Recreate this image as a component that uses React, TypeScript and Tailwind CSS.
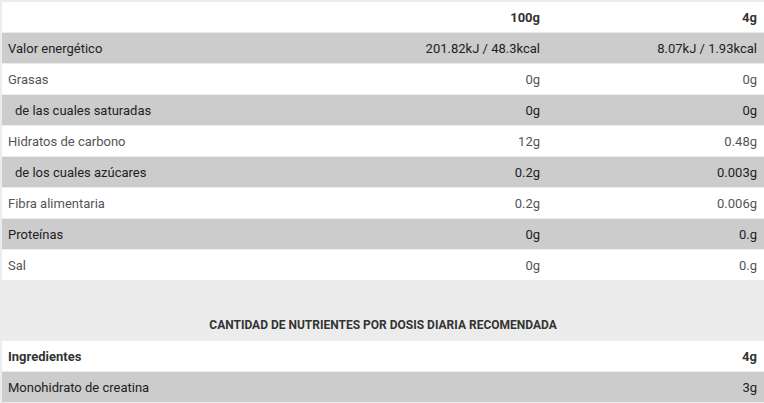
import React from "react";

interface NutrientRow {
  label: string;
  per100: string;
  perDose: string;
  sub?: boolean;
}

const nutrients: NutrientRow[] = [
  { label: "Valor energético", per100: "201.82kJ / 48.3kcal", perDose: "8.07kJ / 1.93kcal" },
  { label: "Grasas", per100: "0g", perDose: "0g" },
  { label: "de las cuales saturadas", per100: "0g", perDose: "0g", sub: true },
  { label: "Hidratos de carbono", per100: "12g", perDose: "0.48g" },
  { label: "de los cuales azúcares", per100: "0.2g", perDose: "0.003g", sub: true },
  { label: "Fibra alimentaria", per100: "0.2g", perDose: "0.006g" },
  { label: "Proteínas", per100: "0g", perDose: "0.g" },
  { label: "Sal", per100: "0g", perDose: "0.g" },
];

const ingredients = [{ name: "Monohidrato de creatina", amount: "3g" }];

export default function App() {
  return (
    <div
      className="w-[764px] h-[403px] overflow-hidden bg-[#ececec] pl-[2px] pt-[2px] text-[13px]"
      style={{ fontFamily: "Roboto, 'Liberation Sans', sans-serif" }}
    >
      <div className="flex flex-col gap-px">
        <div className="flex h-[30px] items-center bg-white pt-px font-bold text-[#333]">
          <div className="flex-1 px-[6px]"></div>
          <div className="w-[217px] px-[7px] text-right">100g</div>
          <div className="w-[217px] px-[7px] text-right">4g</div>
        </div>
        {nutrients.map((row, i) => {
          const gray = i % 2 === 0;
          return (
            <div
              key={row.label}
              className={
                gray
                  ? "flex h-[30px] items-center bg-[#cccccc] pt-px text-[#222]"
                  : "flex h-[30px] items-center bg-white pt-px text-[#555]"
              }
            >
              <div className={row.sub ? "flex-1 pl-[13px]" : "flex-1 pl-[6px]"}>{row.label}</div>
              <div className="w-[217px] px-[7px] text-right">{row.per100}</div>
              <div className="w-[217px] px-[7px] text-right">{row.perDose}</div>
            </div>
          );
        })}
      </div>

      <div className="flex h-[61px] items-end justify-center pb-[7px] text-[12px] font-bold uppercase text-[#333]">
        Cantidad de nutrientes por dosis diaria recomendada
      </div>

      <div className="flex flex-col gap-px">
        <div className="flex h-[30px] items-center bg-white pt-px font-bold text-[#333]">
          <div className="flex-1 px-[6px]">Ingredientes</div>
          <div className="w-[217px] px-[7px] text-right">4g</div>
        </div>
        {ingredients.map((ing) => (
          <div key={ing.name} className="flex h-[30px] items-center bg-[#cccccc] pt-px text-[#222]">
            <div className="flex-1 px-[6px]">{ing.name}</div>
            <div className="w-[217px] px-[7px] text-right">{ing.amount}</div>
          </div>
        ))}
      </div>
    </div>
  );
}
